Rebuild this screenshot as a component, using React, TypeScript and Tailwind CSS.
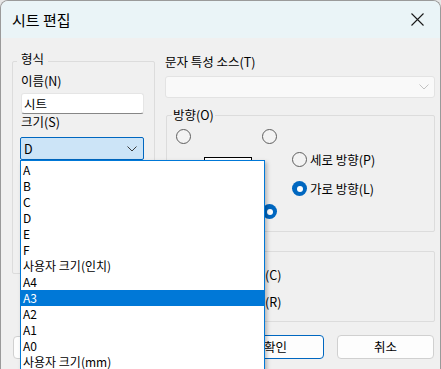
import React from "react";

function Radio({ checked = false }: { checked?: boolean }) {
  if (checked) {
    return (
      <div className="w-[15px] h-[15px] rounded-full bg-[#0067c0] flex items-center justify-center shrink-0">
        <div className="w-[6px] h-[6px] rounded-full bg-white" />
      </div>
    );
  }
  return <div className="w-[15px] h-[15px] rounded-full border border-[#5f5f5f] bg-[#f3f3f3] shrink-0" />;
}

function Chevron({ color }: { color: string }) {
  return (
    <svg width="10" height="6" viewBox="0 0 10 6" className="shrink-0">
      <polyline points="0.5,0.5 5,5 9.5,0.5" fill="none" stroke={color} strokeWidth="1" />
    </svg>
  );
}

export default function App() {
  const items = [
    "A",
    "B",
    "C",
    "D",
    "E",
    "F",
    "사용자 크기(인치)",
    "A4",
    "A3",
    "A2",
    "A1",
    "A0",
    "사용자 크기(mm)",
  ];
  return (
    <div className="w-[441px] h-[369px] overflow-hidden bg-[#e6e6e6] font-['Noto_Sans_CJK_KR',sans-serif] text-[12.5px] leading-[16px] text-black">
      <div className="w-[441px] h-[369px] border border-b-0 border-[#9a9a9a] rounded-t-[8px] bg-[#f0f0f0] overflow-hidden">
        {/* title bar */}
        <div className="h-[37px] bg-[#eaf4f7] flex items-center justify-between pl-[11px] pr-[16px]">
          <span className="text-[15px] leading-[20px]">시트 편집</span>
          <svg width="13" height="13" viewBox="0 0 13 13">
            <path d="M0.5 0.5 L12.5 12.5 M12.5 0.5 L0.5 12.5" stroke="#1a1a1a" strokeWidth="1.1" fill="none" />
          </svg>
        </div>

        {/* body */}
        <div className="pt-[16px]">
          <div className="flex pl-[11px]">
            {/* left column */}
            <div className="w-[143px] mt-[7px]">
              <div className="h-[213px] border border-[#dcdcdc] rounded-[2px] pl-[8px]">
                <div className="-mt-[11px] -ml-[4px] w-fit px-[4px] bg-[#f0f0f0]">형식</div>
                <div className="mt-[6px]">이름(N)</div>
                <div className="mt-[4px] w-[123px] h-[21px] bg-white border border-[#e5e5e5] border-b-[#868686] rounded-[3px] pl-[2px] flex items-center">
                  시트
                </div>
                <div className="mt-0">크기(S)</div>
                <div className="relative mt-[7px] -ml-[1px] w-[124px] h-[23px] bg-[#cce4f7] border border-[#0067c0] rounded-[2px] flex items-center justify-between pl-[3px] pr-[6px]">
                  <span>D</span>
                  <Chevron color="#3c3c3c" />
                  {/* dropdown list */}
                  <div className="absolute left-[-1px] top-[22px] z-10 w-[245px] bg-white border border-[#0078d7] py-[1px] text-[12px] shadow-[2px_2px_4px_rgba(0,0,0,0.25)]">
                    {items.map((it) => (
                      <div
                        key={it}
                        className={
                          it === "A3"
                            ? "h-[16px] leading-[16px] pl-[2px] bg-[#0078d7] text-white"
                            : "h-[16px] leading-[16px] pl-[2px]"
                        }
                      >
                        {it}
                      </div>
                    ))}
                  </div>
                </div>
              </div>
            </div>

            {/* right column */}
            <div className="w-[270px] ml-[10px]">
              <div>문자 특성 소스(T)</div>
              <div className="mt-[6px] h-[22px] bg-[#f9f9f9] border border-[#e3e3e3] rounded-[3px] flex items-center justify-end pr-[5px]">
                <Chevron color="#c2c2c2" />
              </div>

              {/* orientation group */}
              <div className="mt-[17px] h-[117px] ml-[1px] border border-[#dcdcdc] rounded-[2px]">
                <div className="-mt-[9px] ml-[5px] w-fit px-[1px] bg-[#f0f0f0]">방향(O)</div>
                <div className="flex">
                  <div className="ml-[9px] flex flex-col">
                    <div className="mt-[6px]">
                      <Radio />
                    </div>
                    <div className="mt-[13px] ml-[28px] w-[48px] h-[52px] bg-white border border-black" />
                  </div>
                  <div className="ml-[10px] flex flex-col">
                    <div className="mt-[6px]">
                      <Radio />
                    </div>
                    <div className="mt-[60px]">
                      <Radio checked />
                    </div>
                  </div>
                  <div className="ml-[15px] flex flex-col mt-[29px]">
                    <div className="flex items-center gap-[3px] h-[15px]">
                      <Radio />
                      <span>세로 방향(P)</span>
                    </div>
                    <div className="flex items-center gap-[3px] h-[15px] mt-[14px]">
                      <Radio checked />
                      <span>가로 방향(L)</span>
                    </div>
                  </div>
                </div>
              </div>

              {/* second group */}
              <div className="mt-[19px] h-[71px] ml-[1px] border border-[#dcdcdc] rounded-[2px] pt-[15px] pl-[98px]">
                <div>(C)</div>
                <div className="mt-[11px]">(R)</div>
              </div>
            </div>
          </div>

          {/* buttons */}
          <div className="mt-[13px] flex items-center pl-[12px] pr-[6px]">
            <div className="w-[100px] h-[23px] bg-[#fdfdfd] border border-[#d0d0d0] rounded-[4px]" />
            <div className="flex-1" />
            <div className="w-[97px] h-[24px] bg-[#fdfdfd] border border-[#0067c0] rounded-[4px] flex items-center justify-center">
              확인
            </div>
            <div className="ml-[13px] w-[97px] h-[24px] bg-[#fdfdfd] border border-[#d0d0d0] rounded-[4px] flex items-center justify-center">
              취소
            </div>
          </div>
        </div>
      </div>
    </div>
  );
}
